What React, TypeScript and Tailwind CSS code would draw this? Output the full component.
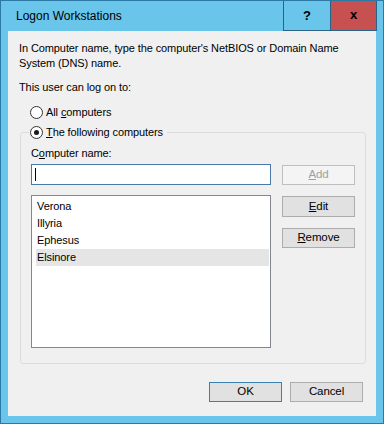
import React, { useState } from 'react';

const computers = ['Verona', 'Illyria', 'Ephesus', 'Elsinore'];

function Radio({ checked }: { checked: boolean }) {
  return (
    <span className="w-[13px] h-[13px] rounded-full border border-[#333333] bg-white flex items-center justify-center shrink-0">
      {checked && <span className="w-[5px] h-[5px] rounded-full bg-[#1a1a1a]" />}
    </span>
  );
}

function WinButton({
  children,
  disabled,
  isDefault,
  className = '',
}: {
  children: React.ReactNode;
  disabled?: boolean;
  isDefault?: boolean;
  className?: string;
}) {
  return (
    <button
      className={`w-[73px] h-[20px] flex items-center justify-center text-[11.5px] leading-none border ${
        disabled
          ? 'bg-[#f4f4f4] border-[#bfbfbf] text-[#a0a0a0]'
          : isDefault
            ? 'bg-[#e1e1e1] border-[#3c7fb1] text-black'
            : 'bg-[#e1e1e1] border-[#adadad] text-black'
      } ${className}`}
    >
      {children}
    </button>
  );
}

export default function App() {
  const [mode, setMode] = useState<'all' | 'some'>('some');
  const [selected, setSelected] = useState('Elsinore');

  return (
    <div className="w-[384px] h-[424px] border border-[#2c79a5] bg-[#69c6ea] flex flex-col font-['Liberation_Sans',Arial,sans-serif] text-black select-none">
      {/* Title bar */}
      <div className="h-[30px] flex shrink-0">
        <span className="flex-1 pl-[15px] text-[12px] leading-[30px]">Logon Workstations</span>
        <div className="w-[47px] h-[30px] border-l border-b border-[#2a6384] flex items-center justify-center text-[13px] font-bold">
          ?
        </div>
        <div className="w-[47px] h-[30px] border-x border-b border-[#2a6384] bg-[#c75050] flex items-center justify-center text-[13px] font-bold pb-[2px]">
          x
        </div>
        <div className="w-[6px]" />
      </div>

      {/* Client area */}
      <div className="mx-[7px] h-[385px] bg-[#f0f0f0] flex flex-col pl-[11px] pr-[10px] pt-[10px] text-[11px] leading-[15px] tracking-[-0.1px]">
        <p>
          In Computer name, type the computer's NetBIOS or Domain Name
          <br />
          System (DNS) name.
        </p>
        <p className="mt-[9px]">This user can log on to:</p>

        <div className="mt-[10px] ml-[11px] flex items-center gap-[3px] h-[15px]" onClick={() => setMode('all')}>
          <Radio checked={mode === 'all'} />
          <span>
            All <span className="underline">c</span>omputers
          </span>
        </div>

        <fieldset className="mt-[5px] ml-[1px] border border-[#dcdcdc] rounded-[3px]">
          <legend className="ml-[8px] pr-[4px] pl-[1px]">
            <div className="flex items-center gap-[3px] h-[15px]" onClick={() => setMode('some')}>
              <Radio checked={mode === 'some'} />
              <span>
                <span className="underline">T</span>he following computers
              </span>
            </div>
          </legend>

          <div className="pl-[10px] pt-[6px] pb-[15px]">
            <p>
              C<span className="underline">o</span>mputer name:
            </p>
            <div className="mt-[3px] grid grid-cols-[240px_73px] gap-x-[11px] items-start">
              <div className="h-[21px] border border-[#4a78a8] bg-white flex items-center pl-[3px]">
                <span className="w-px h-[13px] bg-black" />
              </div>
              <WinButton disabled className="mt-[1px]">
                <span>
                  <span className="underline">A</span>dd
                </span>
              </WinButton>

              <div className="mt-[10px] h-[153px] border border-[#828790] bg-white pt-[2px] pl-[4px] pr-[1px]">
                {computers.map((c) => (
                  <div
                    key={c}
                    onClick={() => setSelected(c)}
                    className={`h-[17px] leading-[17px] pl-[1px] ${selected === c ? 'bg-[#e5e5e5]' : ''}`}
                  >
                    {c}
                  </div>
                ))}
              </div>
              <div className="mt-[11px] flex flex-col gap-[11px]">
                <WinButton className="h-[21px]">
                  <span>
                    <span className="underline">E</span>dit
                  </span>
                </WinButton>
                <WinButton>
                  <span>
                    <span className="underline">R</span>emove
                  </span>
                </WinButton>
              </div>
            </div>
          </div>
        </fieldset>

        <div className="mt-[18px] mr-[3px] flex justify-end gap-[8px]">
          <WinButton isDefault>OK</WinButton>
          <WinButton>Cancel</WinButton>
        </div>
      </div>
    </div>
  );
}
